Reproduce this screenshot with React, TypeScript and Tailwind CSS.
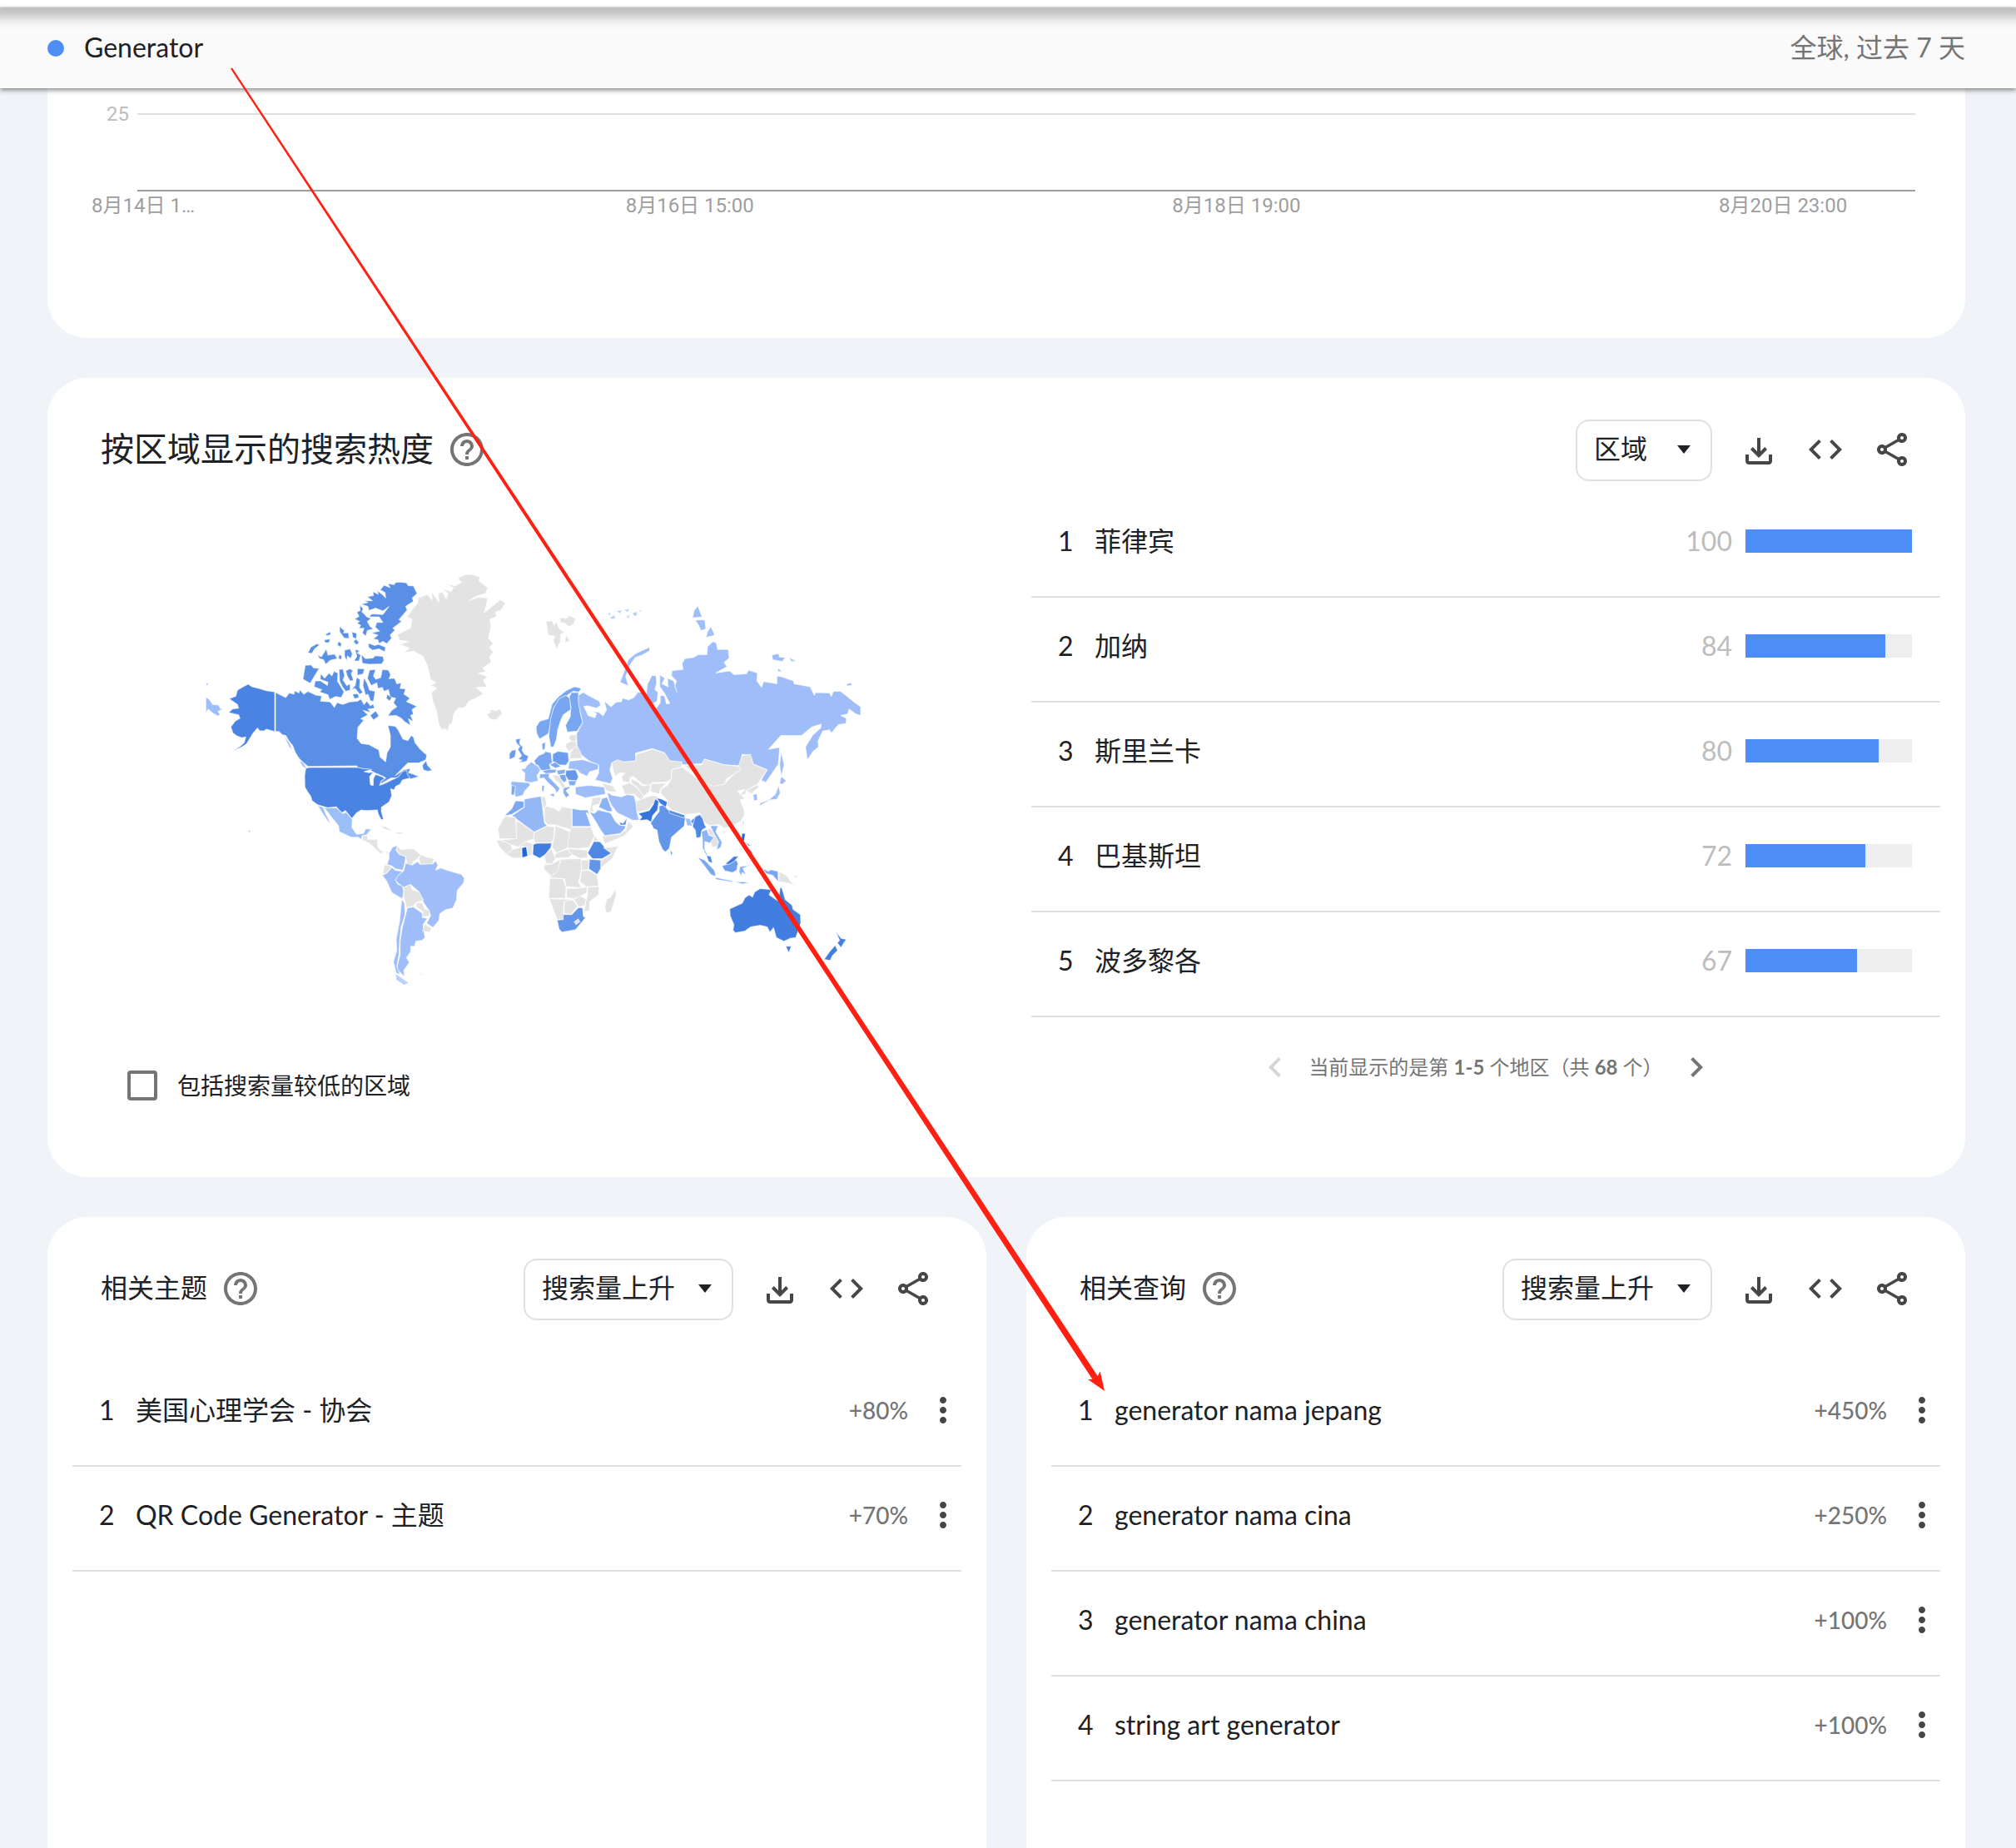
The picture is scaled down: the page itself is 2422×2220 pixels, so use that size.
import React from "react";

type Shape = [fill: string, points: string];

const GRAY = "#e3e3e3";
const LIGHT = "#9fbef9";

const WEST: Shape[] = [
  [GRAY, "1010,58 1040,68 1036,80 1068,105 1060,125 1030,133 1000,150 1034,138 1068,140 1060,175 1055,192 1090,165 1112,147 1133,158 1115,183 1095,190 1100,205 1075,215 1080,240 1070,280 1088,300 1074,312 1088,330 1075,345 1080,365 1050,385 1062,398 1034,402 1068,415 1052,428 1065,450 1026,452 1052,475 1020,492 1000,500 985,522 960,525 945,545 940,575 928,585 925,604 912,596 902,602 890,575 885,540 870,500 865,470 884,455 862,445 882,436 862,425 850,375 835,345 800,325 765,332 785,315 752,303 782,292 750,288 742,268 790,245 795,215 778,206 790,190 800,175 815,160 818,140 850,128 868,148 866,120 892,155 890,125 905,120 918,143 925,125 905,108 935,118 945,105 915,92 950,98 975,85 948,78 970,82 960,70 985,60"],
  [GRAY, "1058,530 1080,538 1065,546 1076,562 1095,566 1120,545 1112,528 1096,534 1085,530 1072,534"],
  ["#4a83e1", "205,441 218,450 240,455 270,464 300,468 300,606 270,598 262,604 245,603 238,594 222,612 212,628 198,650 182,660 150,674 178,656 190,645 196,625 182,628 165,622 150,612 142,590 158,570 175,560 170,548 134,540 148,528 170,525 166,512 136,492 160,483 166,462 190,448"],
  ["#5a8fe6", "303,470 340,488 352,472 370,476 372,464 388,472 390,460 405,476 420,466 450,480 470,482 465,500 500,503 515,522 525,505 545,512 570,503 600,500 610,492 622,512 632,500 645,516 655,510 660,525 636,528 646,540 618,532 636,548 610,562 622,566 600,592 597,630 612,648 640,652 675,670 680,695 700,712 705,680 717,660 717,620 708,585 735,588 745,600 762,632 780,638 792,620 800,625 806,645 822,665 838,680 848,688 845,705 828,712 820,716 780,716 735,760 765,740 790,735 782,750 800,755 820,764 790,772 765,762 750,768 720,768 705,776 680,790 684,780 700,768 690,762 660,750 640,738 600,733 596,726 420,728 400,712 388,700 375,680 365,655 352,640 340,620 328,618 315,606 303,606"],
  ["#5a8fe6", "832,724 846,708 850,722 868,742 850,745 836,740"],
  ["#5a8fe6", "688,390 710,392 718,408 712,422 732,420 740,440 756,436 752,456 772,458 766,476 788,490 775,502 812,518 795,530 800,545 790,550 800,572 782,562 790,585 768,572 756,560 738,550 708,552 722,532 740,520 728,506 736,490 716,486 710,460 694,466 688,452 672,456 668,436 648,446 634,420 642,392 664,390 656,412 664,424 682,418"],
  ["#5a8fe6", "752,85 775,88 782,98 800,98 813,125 796,140 800,152 772,170 778,182 748,216 758,222 726,246 734,252 716,270 722,280 704,300 690,292 676,300 672,286 655,284 672,270 648,262 678,256 662,242 668,226 690,226 676,206 640,206 650,196 690,198 712,170 690,186 664,176 640,184 636,170 612,162 636,156 622,150 652,150 634,136 656,132 654,118 674,128 668,114 688,128 700,140 698,122 680,112 694,96 716,104 708,90 730,94 736,86"],
  ["#5a8fe6", "606,165 620,178 614,188 632,206 648,212 634,222 644,240 656,248 634,254 628,274 616,262 622,246 604,246 610,236 596,228 606,222 588,214 604,204 596,190 608,184"],
  ["#5a8fe6", "638,298 660,306 674,302 700,312 696,328 676,318 652,322 638,312"],
  ["#5a8fe6", "612,338 628,352 654,350 662,342 690,344 694,358 686,370 640,372 616,368"],
  ["#5a8fe6", "534,240 552,254 548,262 566,262 568,282 550,280 534,258"],
  ["#5a8fe6", "578,258 596,264 594,284 582,278"],
  ["#5a8fe6", "592,282 604,296 596,304 584,294"],
  ["#5a8fe6", "482,268 500,258 502,268 488,272"],
  ["#5a8fe6", "478,286 500,284 496,296 482,296"],
  ["#5a8fe6", "420,332 430,312 452,300 462,304 444,318 434,334"],
  ["#5a8fe6", "454,338 468,346 486,318 492,340 516,336 526,352 500,358 484,372 476,356 462,352"],
  ["#5a8fe6", "530,292 542,300 536,312 526,304"],
  ["#5a8fe6", "552,322 572,318 580,336 574,352 562,342 560,360 552,344"],
  ["#5a8fe6", "590,320 606,324 598,332 610,340 604,360 586,360 596,344"],
  ["#5a8fe6", "532,338 542,342 540,356 530,352"],
  ["#5a8fe6", "410,375 432,374 440,384 460,386 448,406 428,438 402,424"],
  ["#5a8fe6", "466,404 480,420 496,402 506,412 514,396 528,402 526,430 540,452 550,468 540,488 520,484 498,494 492,478 462,468 470,460 442,450 446,430 466,430 490,446 492,434 464,424"],
  ["#5a8fe6", "532,390 546,388 552,412 546,426 560,446 572,440 572,462 556,466 544,450 534,430"],
  ["#5a8fe6", "556,394 570,388 582,392 576,404 584,428 572,430 562,414"],
  ["#5a8fe6", "598,386 624,388 618,406 598,410"],
  ["#5a8fe6", "596,416 608,426 606,452 618,470 606,476 590,456 576,460 590,446"],
  ["#5a8fe6", "622,418 634,440 642,462 662,466 656,500 646,500 636,476 628,480 618,446"],
  ["#5a8fe6", "580,476 600,474 604,488 588,492"],
  ["#5a8fe6", "644,550 664,534 676,552 656,566"],
  ["#5a8fe6", "706,476 722,488 714,500 702,490"],
  ["#a9c5fa", "334,620 346,636 356,650 364,670 352,660 342,640"],
  ["#a9c5fa", "386,704 404,716 418,738 400,728"],
  ["#4a83e1", "412,735 423,732 596,731 620,736 650,738 622,746 640,750 655,748 642,764 645,792 655,795 656,770 664,756 690,765 696,772 684,778 678,794 700,786 720,776 745,765 762,745 776,742 778,756 788,768 760,775 752,790 736,798 730,810 718,806 722,830 712,852 685,870 684,884 692,912 684,914 674,896 670,880 630,882 612,880 595,890 578,910 555,882 542,890 522,869 490,872 455,862 435,848 430,832 418,815 409,800 408,760"],
  ["#9dbff8", "455,865 490,873 522,872 545,892 558,888 580,912 578,940 595,965 620,962 628,945 648,947 632,966 615,970 612,982 600,975 575,975 533,955 530,935 505,905 482,876 474,870 485,895 503,930 488,914 468,885"],
  [GRAY, "618,970 635,968 635,982 670,982 672,1010 688,1025 708,1024 712,1036 698,1026 680,1032 655,1008 640,995 615,985"],
  [GRAY, "672,935 700,938 728,955 700,948 680,937"],
  [GRAY, "735,960 750,955 768,963 740,963"],
  [LIGHT, "744,1003 737,1020 750,1035 772,1042 770,1060 762,1090 735,1085 722,1075 705,1070 712,1050 712,1030 725,1010"],
  [GRAY, "742,1005 755,1018 800,1015 825,1035 815,1050 800,1060 795,1072 778,1070 772,1042 752,1035 738,1020"],
  [GRAY, "825,1035 850,1045 875,1050 868,1068 825,1070 820,1050"],
  [GRAY, "700,1070 722,1078 705,1100 690,1104 693,1080"],
  [LIGHT, "722,1080 735,1090 760,1095 750,1105 735,1125 745,1140 760,1145 765,1165 760,1190 722,1168 705,1130 688,1108 705,1100"],
  [LIGHT, "765,1092 772,1065 795,1072 815,1060 825,1070 870,1068 880,1056 888,1072 880,1090 898,1082 915,1088 950,1098 972,1104 984,1118 980,1135 958,1160 955,1195 942,1222 915,1228 895,1242 892,1265 870,1290 848,1275 862,1248 855,1230 835,1200 820,1165 790,1140 765,1150 745,1135 735,1125 745,1108"],
  [GRAY, "765,1150 790,1140 795,1158 820,1165 837,1195 810,1202 800,1215 775,1220 765,1180"],
  [GRAY, "812,1202 833,1205 840,1225 858,1230 858,1250 832,1252 835,1235 808,1215"],
  [LIGHT, "758,1192 768,1205 770,1245 755,1290 750,1340 748,1385 740,1425 752,1455 738,1448 728,1410 740,1370 738,1330 750,1270"],
  ["#b9d0fb", "736,1452 750,1460 784,1484 765,1490 738,1472"],
  [LIGHT, "778,1222 800,1218 832,1240 832,1255 850,1258 835,1280 838,1305 842,1325 832,1334 808,1338 805,1355 790,1355 790,1375 775,1395 785,1412 765,1440 768,1462 745,1440 742,1425 752,1385 752,1340 760,1290 772,1245"],
  [GRAY, "840,1276 866,1292 858,1306 833,1302"],
  [GRAY, "822,1450 836,1450 828,1456"],
  [LIGHT, "52,485 66,496 76,512 98,514 104,526 115,528 96,536 104,548 94,552 74,540 60,528 52,542"],
  [LIGHT, "52,436 64,440 54,446"],
  ["#4a83e1", "205,950 212,954 207,958"],
];

const EAST: Shape[] = [
  ["#6a9bec", "118,634 136,630 132,648 144,660 142,672 150,685 165,692 158,710 130,716 142,706 128,702 140,690 126,668 134,658 122,648"],
  ["#6a9bec", "96,684 104,672 120,670 116,695 96,704"],
  ["#97bbf7", "102,780 165,785 172,792 150,815 145,828 120,835 115,828 116,800 102,794"],
  ["#7ca8f1", "104,794 118,797 113,828 102,826"],
  ["#9dc0f8", "135,735 152,736 160,724 175,712 200,728 208,742 195,760 200,778 175,785 150,780 152,752"],
  ["#78a6f0", "185,708 202,690 222,682 224,676 246,680 250,715 240,722 246,740 210,742 200,725 190,720"],
  ["#78a6f0", "213,650 226,642 224,668 215,670"],
  ["#6d9eec", "252,685 270,675 308,680 310,710 300,724 275,722 252,710"],
  ["#78a6f0", "192,590 206,570 236,562 250,510 272,486 300,464 330,450 354,455 348,468 325,466 290,490 255,525 248,560 240,600 235,615 205,632 195,615"],
  ["#78a6f0", "300,480 314,490 317,530 290,548 280,570 270,600 265,635 255,660 245,660 238,620 245,560 255,525 275,492"],
  ["#78a6f0", "320,470 345,470 345,500 352,545 360,575 340,605 305,608 298,585 315,555 318,520 312,485"],
  [GRAY, "315,618 338,618 336,640 320,640 310,630"],
  [GRAY, "300,650 318,640 336,642 340,658 322,668 312,675 298,662"],
  [GRAY, "316,680 328,662 346,658 360,678 356,700 312,702"],
  [LIGHT, "312,710 360,704 385,712 418,720 415,738 385,746 376,762 352,752 340,740 308,736"],
  ["#6496ea", "300,742 335,740 345,765 338,778 308,775 298,760"],
  ["#84adf3", "308,778 338,778 332,795 312,795"],
  ["#84adf3", "290,802 320,798 300,812 312,828 300,838 290,820"],
  ["#78a6f0", "240,722 262,713 282,728 262,734"],
  ["#84adf3", "214,744 240,738 266,738 262,750 228,754"],
  ["#84adf3", "266,742 298,738 296,752 272,758"],
  [GRAY, "250,757 274,760 288,782 298,796 290,808 276,786 262,776"],
  ["#78a6f0", "276,758 298,756 302,778 292,784 280,770"],
  ["#8cb3f5", "205,755 240,752 238,765 262,788 278,805 266,822 260,806 235,785 220,768 205,770"],
  ["#8cb3f5", "240,825 260,822 255,835"],
  ["#8cb3f5", "213,795 222,795 220,815 213,815"],
  [LIGHT, "333,800 380,794 438,800 442,825 400,832 370,838 335,825"],
  [LIGHT, "345,480 362,470 384,482 420,500 425,515 410,525 378,516 364,518 380,550 404,558 410,544 398,536 420,540 434,552 446,530 438,500 462,520 480,504 500,502 504,490 526,496 544,488 560,468 578,470 588,485 594,440 610,410 625,412 626,440 620,460 632,470 628,500 612,510 625,525 640,505 640,480 655,482 662,510 674,508 656,474 638,450 638,408 656,420 646,440 668,450 666,420 688,430 700,468 692,450 698,430 680,412 682,394 722,390 718,370 728,352 760,348 776,338 808,338 810,310 830,292 842,298 846,320 885,320 888,350 870,365 880,380 840,402 890,395 906,408 950,405 958,392 990,402 988,430 1005,452 1012,432 1040,436 1060,440 1060,412 1080,416 1120,430 1122,440 1180,450 1195,480 1200,470 1250,472 1256,484 1264,466 1290,466 1315,485 1340,505 1362,520 1362,550 1345,545 1320,528 1315,545 1290,550 1310,560 1310,578 1282,582 1256,612 1250,600 1225,605 1208,640 1210,660 1190,676 1170,705 1163,660 1190,618 1218,594 1220,580 1186,590 1150,620 1075,620 1030,668 1070,662 1065,720 1020,784 1003,776 1025,740 975,720 965,690 935,685 925,725 870,722 800,703 790,718 725,722 670,708 655,680 610,666 550,682 552,710 510,712 465,715 458,740 468,770 460,788 405,775 418,750 418,722 385,710 358,690 340,655 338,615 360,575 345,510"],
  [LIGHT, "1076,678 1086,722 1076,764 1070,720"],
  [LIGHT, "600,312 602,324 574,340 550,348 530,375 515,415 525,448 495,434 510,395 525,355 550,335"],
  [LIGHT, "775,168 790,206 756,210 762,184"],
  [LIGHT, "766,218 800,216 804,248 786,254 778,236"],
  [LIGHT, "822,240 836,270 805,278 810,258"],
  [LIGHT, "1042,340 1065,334 1070,346 1090,348 1080,362 1045,356"],
  [LIGHT, "1104,346 1116,354 1130,360 1112,362"],
  [LIGHT, "1066,386 1080,398 1062,396"],
  [LIGHT, "1310,440 1328,436 1330,444 1316,448"],
  ["#b9d0fb", "448,196 462,190 460,202"],
  ["#b9d0fb", "458,210 474,198 478,212 464,214"],
  ["#b9d0fb", "482,186 500,182 496,196"],
  ["#b9d0fb", "508,182 530,178 522,190"],
  ["#b9d0fb", "516,206 530,196 526,212"],
  ["#b9d0fb", "540,192 556,188 556,202 544,204"],
  ["#b9d0fb", "562,184 576,182 566,190"],
  [GRAY, "228,222 250,220 258,236 264,222 276,248 294,260 280,268 280,292 266,318 254,288 260,274 236,270 232,248"],
  [GRAY, "278,208 300,212 314,202 334,212 326,234 308,240 296,228 280,226"],
  [GRAY, "300,270 314,290 296,296"],
  [GRAY, "465,715 485,705 510,712 552,708 552,686 612,668 655,682 675,708 718,712 715,730 680,740 680,770 665,782 610,785 600,795 575,790 542,762 530,768 530,785 505,780 500,765 512,752 494,750 478,762 470,742"],
  [GRAY, "500,795 530,785 556,802 580,832 570,845 545,825 512,825 506,808"],
  [GRAY, "534,770 556,780 575,796 605,792 600,815 580,832 556,800 536,786"],
  [GRAY, "608,788 662,786 640,808 636,825 604,815"],
  [GRAY, "552,850 590,835 615,830 635,835 615,858 595,880 555,888"],
  [GRAY, "428,786 470,796 482,818 448,814"],
  [LIGHT, "448,818 466,828 500,834 520,826 545,830 552,855 555,885 563,915 540,916 515,904 485,890 465,865 455,845"],
  ["#3673dd", "560,892 600,882 615,860 622,840 634,850 630,880 612,900 607,922 592,914 564,916 574,904"],
  ["#6396e9", "636,866 655,862 664,876 686,892 730,906 726,936 680,975 672,1015 658,1026 648,1018 635,990 628,950 615,944 605,925 622,902 636,885"],
  ["#3f7ae0", "626,838 645,842 666,852 660,870 640,858"],
  ["#4f88e4", "672,880 728,898 726,908 672,890"],
  ["#6396e9", "756,912 788,894 776,908 758,930 748,920"],
  ["#9fbef9", "730,908 746,910 756,936 736,934"],
  [GRAY, "680,770 682,740 718,730 735,742 785,780 835,795 870,790 905,755 930,740 920,730 935,690 965,685 975,720 1025,740 1005,768 990,790 950,812 948,824 926,828 945,808 918,814 936,832 944,840 928,846 942,880 942,900 930,920 900,935 872,944 850,930 820,935 800,925 782,890 730,896 680,880 664,862 665,845 640,822 645,805 665,795"],
  [GRAY, "728,725 790,722 798,702 870,722 922,728 930,740 905,755 880,770 870,790 835,797 785,780 780,768"],
  [GRAY, "865,952 876,956 868,962"],
  [GRAY, "950,812 990,792 996,800 975,816 968,824"],
  [LIGHT, "974,826 988,824 990,845 978,848"],
  [LIGHT, "1076,762 1094,778 1078,792 1070,785"],
  [LIGHT, "1066,795 1072,820 1060,842 1035,845 998,866 1000,856 1030,845 1055,825"],
  [LIGHT, "936,920 942,920 938,936"],
  ["#4f88e4", "765,904 782,896 792,908 800,932 806,940 790,950 785,975 770,978 766,950 756,938"],
  ["#8cb3f5", "788,955 808,948 815,968 835,975 820,995 800,990 800,1018 812,1040 804,1036 792,1012 792,980"],
  [GRAY, "810,945 822,945 850,985 848,1006 826,1010 822,990 835,975 815,966"],
  ["#8cb3f5", "820,935 848,935 840,955 862,992 858,1010 842,1020 850,990 832,960"],
  ["#4f88e4", "806,1038 822,1042 828,1066 814,1060"],
  ["#78a6f0", "775,1045 800,1055 835,1090 840,1112 822,1105 798,1074"],
  ["#8cb3f5", "838,1115 900,1127 902,1132 840,1122"],
  ["#8cb3f5", "908,1130 940,1130 960,1134 935,1138"],
  ["#6d9eec", "862,1075 885,1068 912,1052 920,1066 915,1090 900,1098 872,1092"],
  ["#3f7ae0", "874,1068 905,1042 922,1042 905,1060 885,1070"],
  ["#8cb3f5", "926,1078 962,1072 938,1084 950,1106 936,1098 930,1110 924,1095"],
  ["#1e66d8", "934,962 946,962 942,990 932,988"],
  ["#4f88e4", "946,990 968,1006 956,1004"],
  ["#4f88e4", "960,1014 974,1030 952,1034"],
  ["#78a6f0", "1008,1084 1030,1094 1038,1088 1064,1094 1065,1130 1045,1108 1022,1102"],
  [GRAY, "1068,1095 1095,1108 1110,1130 1128,1142 1085,1132 1068,1130"],
  [GRAY, "1118,1112 1138,1104 1128,1116"],
  ["#427ee0", "890,1225 935,1205 945,1186 960,1176 972,1184 980,1166 1000,1154 1040,1158 1032,1176 1065,1198 1072,1150 1078,1152 1090,1192 1115,1212 1118,1226 1145,1245 1146,1275 1128,1325 1108,1328 1085,1338 1058,1325 1048,1290 1035,1306 1025,1288 1000,1282 965,1288 945,1302 910,1308 902,1300 905,1280 892,1250"],
  ["#427ee0", "1092,1355 1112,1355 1103,1378"],
  ["#427ee0", "1272,1304 1292,1328 1310,1331 1291,1360 1278,1344 1286,1334"],
  ["#427ee0", "1270,1352 1279,1370 1260,1388 1252,1405 1230,1401 1250,1374"],
  ["#4f88e4", "675,1018 684,1030 679,1040"],
  ["#8cb3f5", "385,886 402,892 415,880 460,890 478,920 492,932 515,936 512,946 495,962 440,970 425,950 410,925"],
  [GRAY, "520,930 526,918 542,938 510,970 440,998 430,972 495,964 516,950"],
  ["#4f88e4", "492,922 506,926 520,908 515,932 496,932"],
  ["#8cb3f5", "430,840 448,835 458,860 468,885 450,885 418,870"],
  [GRAY, "395,838 430,835 420,858 395,866 400,884 386,888 390,860"],
  ["#8cb3f5", "322,875 350,880 378,880 384,896 372,888 390,937 322,937"],
  [GRAY, "222,880 228,866 260,875 275,885 285,868 320,875 322,950 262,932 232,930 222,915"],
  [GRAY, "210,835 225,832 230,860 220,878"],
  ["#94b8f5", "105,900 150,870 150,842 210,832 215,870 222,925 232,935 185,957"],
  ["#7ca8f1", "118,848 148,850 148,870 105,895 78,900 105,875"],
  [GRAY, "55,945 78,902 118,905 122,980 60,980"],
  [GRAY, "120,915 185,957 185,980 155,990 130,1010 100,1000 65,985 122,980"],
  [GRAY, "50,985 65,985 100,1000 108,1018 84,1034 60,1008"],
  [GRAY, "84,1034 108,1018 140,1008 141,1046 110,1048"],
  [GRAY, "130,1006 156,990 180,998 176,1038 162,1040 160,1008"],
  ["#1e66d8", "141,1012 157,1008 162,1040 142,1047"],
  ["#427ee0", "182,1000 195,996 248,995 245,1012 225,1036 205,1048 180,1036"],
  [GRAY, "185,960 232,935 258,940 255,985 245,993 190,995 183,978"],
  [GRAY, "262,935 312,955 312,985 305,1012 265,1030 250,1010 258,970"],
  [GRAY, "322,940 390,940 402,970 384,1010 345,1015 305,1012 312,958"],
  ["#4f88e4", "400,990 425,990 440,1012 465,1030 430,1050 395,1050 378,1030"],
  [GRAY, "400,968 432,1000 424,990 400,988"],
  [GRAY, "436,1012 488,1006 466,1050 426,1082 426,1056 465,1032"],
  ["#6396e9", "385,1052 425,1055 425,1085 412,1105 382,1085"],
  [GRAY, "265,1030 305,1016 322,1036 310,1045 255,1048"],
  [GRAY, "305,1015 345,1018 376,1020 378,1046 350,1048 322,1036"],
  [GRAY, "222,1040 246,1012 262,1050 250,1068 228,1066"],
  [GRAY, "220,1072 250,1068 280,1052 270,1095 248,1112 222,1088"],
  [GRAY, "282,1052 355,1050 355,1095 345,1130 355,1152 300,1146 295,1120 240,1115 268,1095"],
  [GRAY, "355,1055 382,1055 382,1088 356,1090"],
  [GRAY, "356,1092 382,1090 412,1108 418,1145 375,1148 350,1130"],
  [GRAY, "242,1118 290,1120 300,1150 298,1188 238,1188"],
  [GRAY, "302,1155 360,1152 375,1148 375,1168 345,1185 325,1190 302,1185"],
  [GRAY, "378,1150 418,1147 418,1175 385,1200 385,1230 365,1235 372,1195 378,1175"],
  [GRAY, "240,1190 325,1192 292,1200 290,1260 268,1262"],
  [GRAY, "295,1198 325,1194 342,1216 318,1244 292,1240"],
  [GRAY, "328,1192 350,1180 372,1190 368,1212 346,1218"],
  ["#6396e9", "268,1264 290,1262 290,1245 320,1245 345,1220 360,1222 362,1250 370,1256 335,1297 285,1306 275,1295"],
  [GRAY, "330,1270 344,1260 350,1270 336,1280"],
  [GRAY, "478,1158 481,1178 462,1235 445,1240 440,1218 446,1192 460,1184"],
];

function Shapes({ items }: { items: Shape[] }) {
  return (
    <>
      {items.map(([fill, points], i) => (
        <polygon key={i} points={points} fill={fill} stroke="#ffffff" strokeOpacity={0.6} strokeWidth={3} strokeLinejoin="round" />
      ))}
    </>
  );
}

function WorldMap() {
  return (
    <svg viewBox="9 0 2490 1568" preserveAspectRatio="none" className="mx-auto h-[540px] w-[830px] max-w-full" role="img" aria-label="按区域显示的搜索热度">
      <Shapes items={WEST} />
      <g transform="translate(1050 0)">
        <Shapes items={EAST} />
      </g>
    </svg>
  );
}

function Icon({ d, className }: { d: string; className: string }) {
  return (
    <svg viewBox="0 0 24 24" fill="currentColor" className={className} aria-hidden="true">
      <path d={d} />
    </svg>
  );
}

const HELP =
  "M11 18h2v-2h-2v2zm1-16C6.48 2 2 6.48 2 12s4.48 10 10 10 10-4.48 10-10S17.52 2 12 2zm0 18c-4.41 0-8-3.59-8-8s3.59-8 8-8 8 3.59 8 8-3.59 8-8 8zm0-14c-2.21 0-4 1.79-4 4h2c0-1.1.9-2 2-2s2 .9 2 2c0 2-3 1.75-3 5h2c0-2.25 3-2.5 3-5 0-2.21-1.79-4-4-4z";
const DOWNLOAD =
  "M12 17l-5-5 1.4-1.45 2.6 2.6V5h2v8.15l2.6-2.6L17 12zM6 21q-.825 0-1.4125-.5875T4 19v-4h2v4h12v-4h2v4q0 .825-.5875 1.4125T18 21z";
const EMBED = "M9.4 16.6 4.8 12l4.6-4.6L8 6l-6 6 6 6zm5.2 0 4.6-4.6-4.6-4.6L16 6l6 6-6 6z";
const SHARE =
  "M18 16c-.79 0-1.5.31-2.04.81L8.91 12.7c.05-.23.09-.46.09-.7s-.04-.47-.09-.7l7.05-4.11c.54.5 1.25.81 2.04.81 1.66 0 3-1.34 3-3s-1.34-3-3-3-3 1.34-3 3c0 .24.04.47.09.7L8.04 9.81C7.5 9.31 6.79 9 6 9c-1.66 0-3 1.34-3 3s1.34 3 3 3c.79 0 1.5-.31 2.04-.81l7.05 4.12c-.05.22-.09.45-.09.69 0 1.66 1.34 3 3 3s3-1.34 3-3-1.34-3-3-3zM18 4c.55 0 1 .45 1 1s-.45 1-1 1-1-.45-1-1 .45-1 1-1zM6 13c-.55 0-1-.45-1-1s.45-1 1-1 1 .45 1 1-.45 1-1 1zm12 7c-.55 0-1-.45-1-1s.45-1 1-1 1 .45 1 1-.45 1-1 1z";
const MORE =
  "M12 8c1.1 0 2-.9 2-2s-.9-2-2-2-2 .9-2 2 .9 2 2 2zm0 2c-1.1 0-2 .9-2 2s.9 2 2 2 2-.9 2-2-.9-2-2-2zm0 6c-1.1 0-2 .9-2 2s.9 2 2 2 2-.9 2-2-.9-2-2-2z";
const PREV = "M15.41 7.41 14 6l-6 6 6 6 1.41-1.41L10.83 12z";
const NEXT = "M10 6 8.59 7.41 13.17 12l-4.58 4.59L10 18l6-6z";

function CardHeader({ title, large, option, selectClass }: { title: string; large?: boolean; option: string; selectClass: string }) {
  return (
    <div className="flex items-center justify-between pl-16 pr-16 pt-[50px]">
      <div className="flex items-center gap-4 pb-0.5">
        <h2 className={large ? "pb-0.5 text-[40px] leading-[48px]" : "pb-0.5 text-[32px] leading-[48px]"}>{title}</h2>
        <button type="button" aria-label="帮助" className="text-[#757575]">
          <Icon d={HELP} className="size-12" />
        </button>
      </div>
      <div className="flex items-center gap-8">
        <div className="relative">
          <select aria-label={title} className={`h-[74px] appearance-none rounded-2xl border-2 border-[#e0e0e0] bg-white pb-1 pl-5 text-[32px] ${selectClass}`}>
            <option>{option}</option>
          </select>
          <svg viewBox="0 0 16 10" className="pointer-events-none absolute right-[26px] top-[31px] h-2.5 w-4" aria-hidden="true">
            <path d="M0 0h16L8 10z" fill="#202124" />
          </svg>
        </div>
        <div className="flex gap-8 pb-0.5 text-[#444746]">
          <button type="button" aria-label="下载">
            <Icon d={DOWNLOAD} className="size-12" />
          </button>
          <button type="button" aria-label="嵌入">
            <Icon d={EMBED} className="size-12" />
          </button>
          <button type="button" aria-label="分享">
            <Icon d={SHARE} className="size-12" />
          </button>
        </div>
      </div>
    </div>
  );
}

function Row({ rank, name, children }: { rank: number; name: string; children: React.ReactNode }) {
  return (
    <li className="flex h-[126px] items-center border-b-2 border-[#e0e0e0] pb-2 pl-8 text-[32px] leading-10">
      <span className="w-11">{rank}</span>
      <span className="flex-1">{name}</span>
      {children}
    </li>
  );
}

const REGIONS = [
  { name: "菲律宾", value: 100 },
  { name: "加纳", value: 84 },
  { name: "斯里兰卡", value: 80 },
  { name: "巴基斯坦", value: 72 },
  { name: "波多黎各", value: 67 },
];

function RegionCard() {
  return (
    <section className="mt-12 rounded-[48px] bg-white pb-[90px]">
      <CardHeader title="按区域显示的搜索热度" large option="区域" selectClass="w-[164px]" />
      <div className="mt-3.5 grid grid-cols-[1182fr_1092fr] pr-[30px]">
        <div className="pt-[78px]">
          <WorldMap />
          <label className="mt-[74px] flex items-center gap-6 pl-24 text-[28px] leading-10">
            <input type="checkbox" className="size-9 appearance-none rounded border-4 border-[#757575]" />
            包括搜索量较低的区域
          </label>
        </div>
        <div>
          <ol>
            {REGIONS.map((r, i) => (
              <Row key={r.name} rank={i + 1} name={r.name}>
                <span className="pr-4 text-[#bdbdbd]">{r.value}</span>
                <span className="mr-[34px] h-7 w-[200px] bg-[#eeeeee]">
                  <span className="block h-full bg-[#4c8df6]" style={{ width: `${r.value}%` }} />
                </span>
              </Row>
            ))}
          </ol>
          <div className="mt-9 flex items-center justify-center gap-4 text-2xl text-[#757575]">
            <button type="button" aria-label="上一页" disabled className="text-[#d5d5d5]">
              <Icon d={PREV} className="size-12" />
            </button>
            <span>
              当前显示的是第 <b>1-5</b> 个地区（共 <b>68</b> 个）
            </span>
            <button type="button" aria-label="下一页">
              <Icon d={NEXT} className="size-12" />
            </button>
          </div>
        </div>
      </div>
    </section>
  );
}

function RelatedCard({ title, rows }: { title: string; rows: { name: string; change: string }[] }) {
  return (
    <section className="rounded-t-[48px] bg-white">
      <CardHeader title={title} option="搜索量上升" selectClass="w-[252px]" />
      <ol className="mt-[50px] px-[30px]">
        {rows.map((r, i) => (
          <Row key={r.name} rank={i + 1} name={r.name}>
            <span className="pr-5 text-[28px] font-medium text-[#757575]">{r.change}</span>
            <button type="button" aria-label="更多" className="flex w-11 justify-center text-[#444746]">
              <Icon d={MORE} className="size-12 shrink-0" />
            </button>
          </Row>
        ))}
      </ol>
    </section>
  );
}

const TICKS = ["8月14日 1…", "8月16日 15:00", "8月18日 19:00", "8月20日 23:00"];

export default function App() {
  return (
    <div className="relative flex min-h-screen flex-col overflow-hidden bg-[#f0f4f9] font-[Lato,'Noto_Sans_CJK_SC',sans-serif] text-[#202124]">
      <div className="h-2.5 border-b-2 border-[#e0e0e0] bg-white" />
      <header className="relative flex h-24 items-center justify-between bg-[linear-gradient(to_bottom,#bdbdbd_0px,#cdcdcd_7px,#e6e6e6_14px,#f5f5f5_20px,#fafafa_26px)] pl-[57px] pr-[61px] text-[32px] leading-10 shadow-[0_2px_6px_rgba(0,0,0,0.5)]">
        <div className="flex items-center gap-6">
          <span className="size-5 rounded-full bg-[#4c8df6]" />
          <h1 className="pb-0.5">Generator</h1>
        </div>
        <p className="pb-0.5 text-[#757575]">全球, 过去 7 天</p>
      </header>

      <main className="flex flex-1 flex-col pl-[57px] pr-[61px]">
        <section className="h-[300px] rounded-b-[48px] bg-white pt-[15px] font-[Roboto,'Noto_Sans_CJK_SC',sans-serif] text-2xl leading-8">
          <div className="flex items-center pr-[60px]">
            <span className="w-[108px] pr-2.5 text-right text-[#bdbdbd]">25</span>
            <span className="h-0.5 flex-1 bg-[#e0e0e0]" />
          </div>
          <div className="ml-[108px] mr-[60px] mt-[75px] h-0.5 bg-[#9e9e9e]" />
          <div className="flex justify-between pl-[38px] pr-[142px] pt-px text-[#9e9e9e]">
            {TICKS.map((t) => (
              <span key={t} className="w-[154px] whitespace-nowrap text-center">
                {t}
              </span>
            ))}
          </div>
        </section>

        <RegionCard />

        <div className="mt-12 grid flex-1 grid-cols-2 gap-12">
          <RelatedCard
            title="相关主题"
            rows={[
              { name: "美国心理学会 - 协会", change: "+80%" },
              { name: "QR Code Generator - 主题", change: "+70%" },
            ]}
          />
          <RelatedCard
            title="相关查询"
            rows={[
              { name: "generator nama jepang", change: "+450%" },
              { name: "generator nama cina", change: "+250%" },
              { name: "generator nama china", change: "+100%" },
              { name: "string art generator", change: "+100%" },
            ]}
          />
        </div>
      </main>

      <svg viewBox="0 0 1340 1680" className="pointer-events-none absolute left-0 top-0 h-[1680px] w-[1340px]" aria-hidden="true">
        <path d="M277 82.5 279 81.5 1318.7 1653 1321.7 1647.5 1327 1671 1307 1657 1312.5 1657z" fill="#ff2012" />
      </svg>
    </div>
  );
}
